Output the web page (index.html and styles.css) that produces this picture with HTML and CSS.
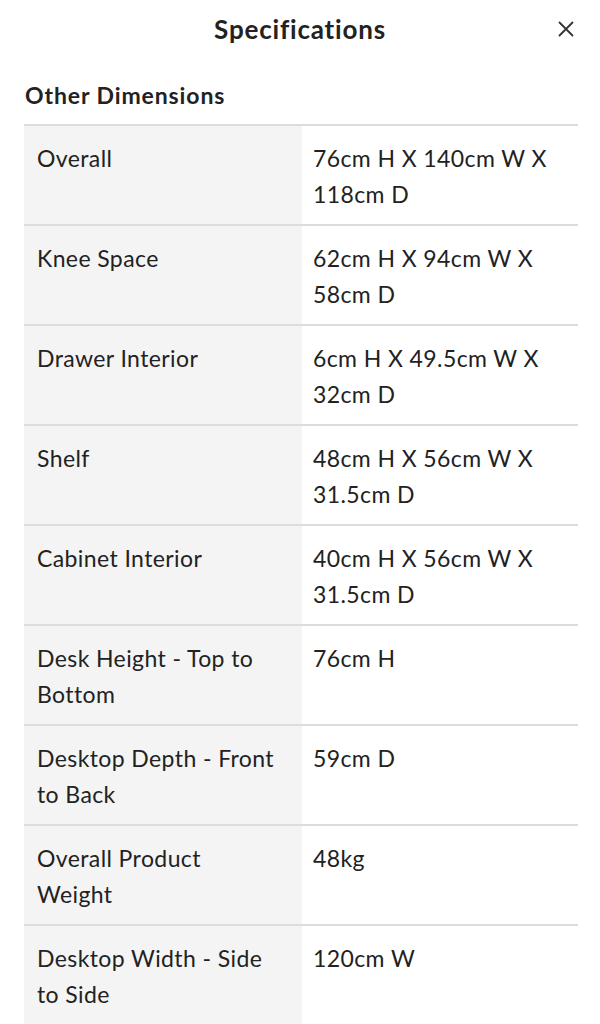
FILE: index.html
```html
<!DOCTYPE html>
<html>
<head>
<meta charset="utf-8">
<link rel="stylesheet" href="styles.css">
</head>
<body>
<div class="header">
  <h1 class="title">Specifications</h1>
  <button class="close" aria-label="Close">
    <svg width="16" height="16" viewBox="0 0 16 16"><path d="M1.5 1.5 L14.5 14.5 M14.5 1.5 L1.5 14.5" stroke="#333" stroke-width="1.8" stroke-linecap="round" fill="none"/></svg>
  </button>
</div>
<h2 class="section">Other Dimensions</h2>
<div class="table">
  <div class="row"><div class="label">Overall</div><div class="value">76cm H X 140cm W X 118cm D</div></div>
  <div class="row"><div class="label">Knee Space</div><div class="value">62cm H X 94cm W X 58cm D</div></div>
  <div class="row"><div class="label">Drawer Interior</div><div class="value">6cm H X 49.5cm W X 32cm D</div></div>
  <div class="row"><div class="label">Shelf</div><div class="value">48cm H X 56cm W X 31.5cm D</div></div>
  <div class="row"><div class="label">Cabinet Interior</div><div class="value">40cm H X 56cm W X 31.5cm D</div></div>
  <div class="row"><div class="label">Desk Height - Top to Bottom</div><div class="value">76cm H</div></div>
  <div class="row"><div class="label">Desktop Depth - Front to Back</div><div class="value">59cm D</div></div>
  <div class="row"><div class="label">Overall Product Weight</div><div class="value">48kg</div></div>
  <div class="row"><div class="label">Desktop Width - Side to Side</div><div class="value">120cm W</div></div>
</div>
</body>
</html>
```

FILE: styles.css
```css
html, body {
  margin: 0;
  padding: 0;
  background: #fff;
}
body {
  font-family: Lato, "Noto Sans", sans-serif;
  color: #222;
}
.header {
  position: relative;
  height: 58px;
  display: flex;
  align-items: center;
  justify-content: center;
}
.title {
  margin: 0;
  font-size: 26px;
  font-weight: 700;
  letter-spacing: 0.8px;
}
.close {
  position: absolute;
  right: 26px;
  top: 21px;
  width: 16px;
  height: 16px;
  padding: 0;
  border: 0;
  background: none;
  display: flex;
}
.section {
  margin: 22px 0 0 25px;
  font-size: 23px;
  font-weight: 700;
  line-height: 30px;
  letter-spacing: 0.9px;
}
.table {
  margin: 14px 22px 0 24px;
}
.row {
  display: grid;
  grid-template-columns: 278px 1fr;
  border-top: 2px solid #dcdce0;
  min-height: 98px;
}
.label, .value {
  font-size: 23px;
  line-height: 36px;
  letter-spacing: 0.4px;
  padding: 14px 13px 0 13px;
}
.label {
  background: #f4f4f4;
  padding-right: 26px;
}
.value {
  padding-left: 11px;
  padding-right: 20px;
}
```
